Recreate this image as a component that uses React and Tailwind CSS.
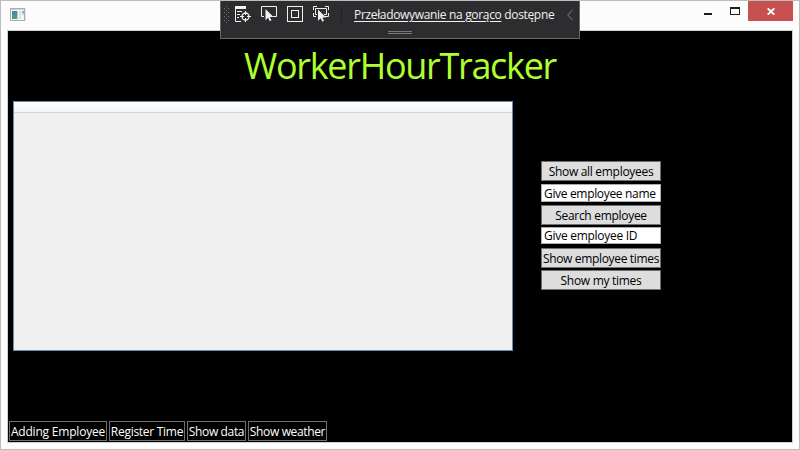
import React from "react";

const font = "font-['Open_Sans','Noto_Sans',sans-serif]";

function SideButton({ children, className }) {
  return (
    <button className={`flex h-5 w-[120px] shrink-0 items-center justify-center whitespace-nowrap border border-[#707070] bg-[#dddddd] pt-px text-[12px] leading-none text-black ${className}`}>
      {children}
    </button>
  );
}

function SideInput({ children, className }) {
  return (
    <div className={`flex w-[120px] shrink-0 items-center whitespace-nowrap border border-[#abadb3] bg-white pl-[2px] text-[12px] leading-none text-black ${className}`}>
      {children}
    </div>
  );
}

function NavButton({ children, className }) {
  return (
    <button className={`flex h-5 shrink-0 items-center justify-center whitespace-nowrap border border-[#707070] bg-black pt-px text-[12px] leading-none text-white ${className}`}>
      {children}
    </button>
  );
}

function AppIcon() {
  return (
    <svg className="ml-[9px] mt-[7px] h-[14px] w-4" viewBox="0 0 16 14" shapeRendering="crispEdges">
      <rect x="0" y="0" width="15" height="13" fill="#a9b0b3" />
      <rect x="1" y="1" width="13" height="1" fill="#cfd4d6" />
      <rect x="1" y="2" width="13" height="10" fill="#f4f6f7" />
      <rect x="2" y="3" width="5" height="4" fill="#4f86a8" />
      <rect x="2" y="7" width="5" height="4" fill="#4f9f7c" />
      <rect x="7" y="3" width="1" height="8" fill="#b7d3cc" />
      <rect x="9" y="3" width="2" height="8" fill="#dfe1e2" />
      <rect x="12" y="3" width="2" height="2" fill="#86a9d0" />
      <rect x="12" y="5" width="2" height="2" fill="#b9dcc0" />
      <rect x="15" y="1" width="1" height="12" fill="#dfe1e2" />
    </svg>
  );
}

const cursor = "M0 0V11.2L2.6 8.8L4.3 12.2L6 11.3L4.4 8H8Z";

function DebugToolbar() {
  const dots = [];
  for (let y = 6; y < 23; y += 2) {
    for (let x = 4 + ((y / 2) % 2) * 2; x < 10; x += 4) dots.push([x, y]);
  }
  return (
    <div className="absolute -top-px left-[219px] h-[39px] w-[360px] border border-[#68686b] bg-[#2d2d30]">
      <svg className="absolute -left-px -top-px h-[39px] w-[360px]" viewBox="0 0 360 39" fill="none">
        {dots.map(([x, y]) => (
          <rect key={`${x}-${y}`} x={x} y={y} width="1" height="1" fill="#77777a" />
        ))}
        <rect x="15" y="6" width="11" height="3" fill="#f1f1f1" />
        <path d="M15.5 8V21.5H21M17 11.5H22M17 14.5H20M17 17.5H19" stroke="#f1f1f1" />
        <circle cx="25.5" cy="16.5" r="3.5" stroke="#f1f1f1" strokeWidth="1.3" />
        <path d="M25.5 11V15M25.5 18V22M20 16.5H24M27 16.5H31" stroke="#f1f1f1" />
        <path d="M44 16.5H41.5V6.5H56.5V16.5H53" stroke="#f1f1f1" />
        <path d={cursor} transform="translate(45.5 9)" fill="#f1f1f1" />
        <rect x="67.5" y="6.5" width="15" height="15" stroke="#f1f1f1" />
        <rect x="71.5" y="10.5" width="7" height="7" stroke="#f1f1f1" />
        <path d="M93.5 10V6.5H97M105 6.5H108.5V10M93.5 13V16.5H96M108.5 13V16.5H105M97 14.5H95.5V8.5H106.5V14.5H104" stroke="#f1f1f1" />
        <path d={cursor} transform="translate(98 9.5)" fill="#f1f1f1" />
        <rect x="121" y="6" width="1" height="16" fill="#222225" />
        <path d="M352.5 10L347.8 15L352.5 20" stroke="#626265" strokeWidth="1.1" />
        <path d="M168 31.5H192M168 33.5H192" stroke="#77777a" />
      </svg>
      <p className="absolute left-[133px] top-[6px] whitespace-nowrap text-[12px] leading-4 tracking-[-0.33px] text-[#f1f1f1]">
        <span className="underline decoration-1 underline-offset-2">Przeładowywanie na gorąco</span> dostępne
      </p>
    </div>
  );
}

export default function App() {
  return (
    <main className={`relative flex h-[450px] w-[800px] flex-col overflow-hidden border border-[#bdbdbd] bg-[#fcfcfc] ${font}`}>
      <header className="flex h-[29px] shrink-0 justify-between">
        <AppIcon />
        <div className="mr-[6px] flex">
          <svg className="h-5 w-[60px]" viewBox="0 0 60 20" shapeRendering="crispEdges">
            <rect x="16" y="12" width="8" height="2" fill="#1e1e1e" />
            <path d="M42 6H52V14H42ZM43 8V13H51V8Z" fill="#1e1e1e" fillRule="evenodd" />
          </svg>
          <div className="flex h-5 w-[45px] items-center justify-center bg-[#c75050]">
            <svg className="mt-px h-[7px] w-2" viewBox="0 0 8 7">
              <path d="M0.7 0.3L7.3 6.7M7.3 0.3L0.7 6.7" stroke="white" strokeWidth="1.8" />
            </svg>
          </div>
        </div>
      </header>

      <section className="ml-[6px] flex h-[413px] w-[786px] shrink-0 flex-col border border-[#cfcfcf] bg-black">
        <h1 className="flex h-[70px] shrink-0 items-center justify-center whitespace-nowrap text-[36px] leading-none tracking-[-1.3px] text-[#adff2f]">
          WorkerHourTracker
        </h1>
        <div className="flex h-[320px] shrink-0 items-start">
          <div className="ml-[5px] h-[250px] w-[500px] border border-[#688caf] bg-[#f0f0f0]">
            <div className="h-[11px] border-b border-[#d5d5d5] bg-linear-to-b from-white to-[#f3f4f6]" />
          </div>
          <div className="ml-7 mt-[60px] flex flex-col">
            <SideButton className="tracking-[-0.3px]">Show all employees</SideButton>
            <SideInput className="mt-[3px] h-[18px] pt-[2px] tracking-[-0.33px]">Give employee name</SideInput>
            <SideButton className="mt-[3px] tracking-[-0.3px]">Search employee</SideButton>
            <SideInput className="mt-[2px] h-[17px] tracking-[-0.28px]">Give employee ID</SideInput>
            <SideButton className="mt-1 tracking-[-0.33px]">Show employee times</SideButton>
            <SideButton className="mt-[2px] tracking-[-0.3px]">Show my times</SideButton>
          </div>
        </div>
        <nav className="ml-px flex gap-[2px]">
          <NavButton className="w-[98px] tracking-[-0.2px]">Adding Employee</NavButton>
          <NavButton className="w-[76px] tracking-[-0.28px]">Register Time</NavButton>
          <NavButton className="w-[59px] tracking-[-0.35px]">Show data</NavButton>
          <NavButton className="w-[79px] tracking-[-0.35px]">Show weather</NavButton>
        </nav>
      </section>
      <DebugToolbar />
    </main>
  );
}
